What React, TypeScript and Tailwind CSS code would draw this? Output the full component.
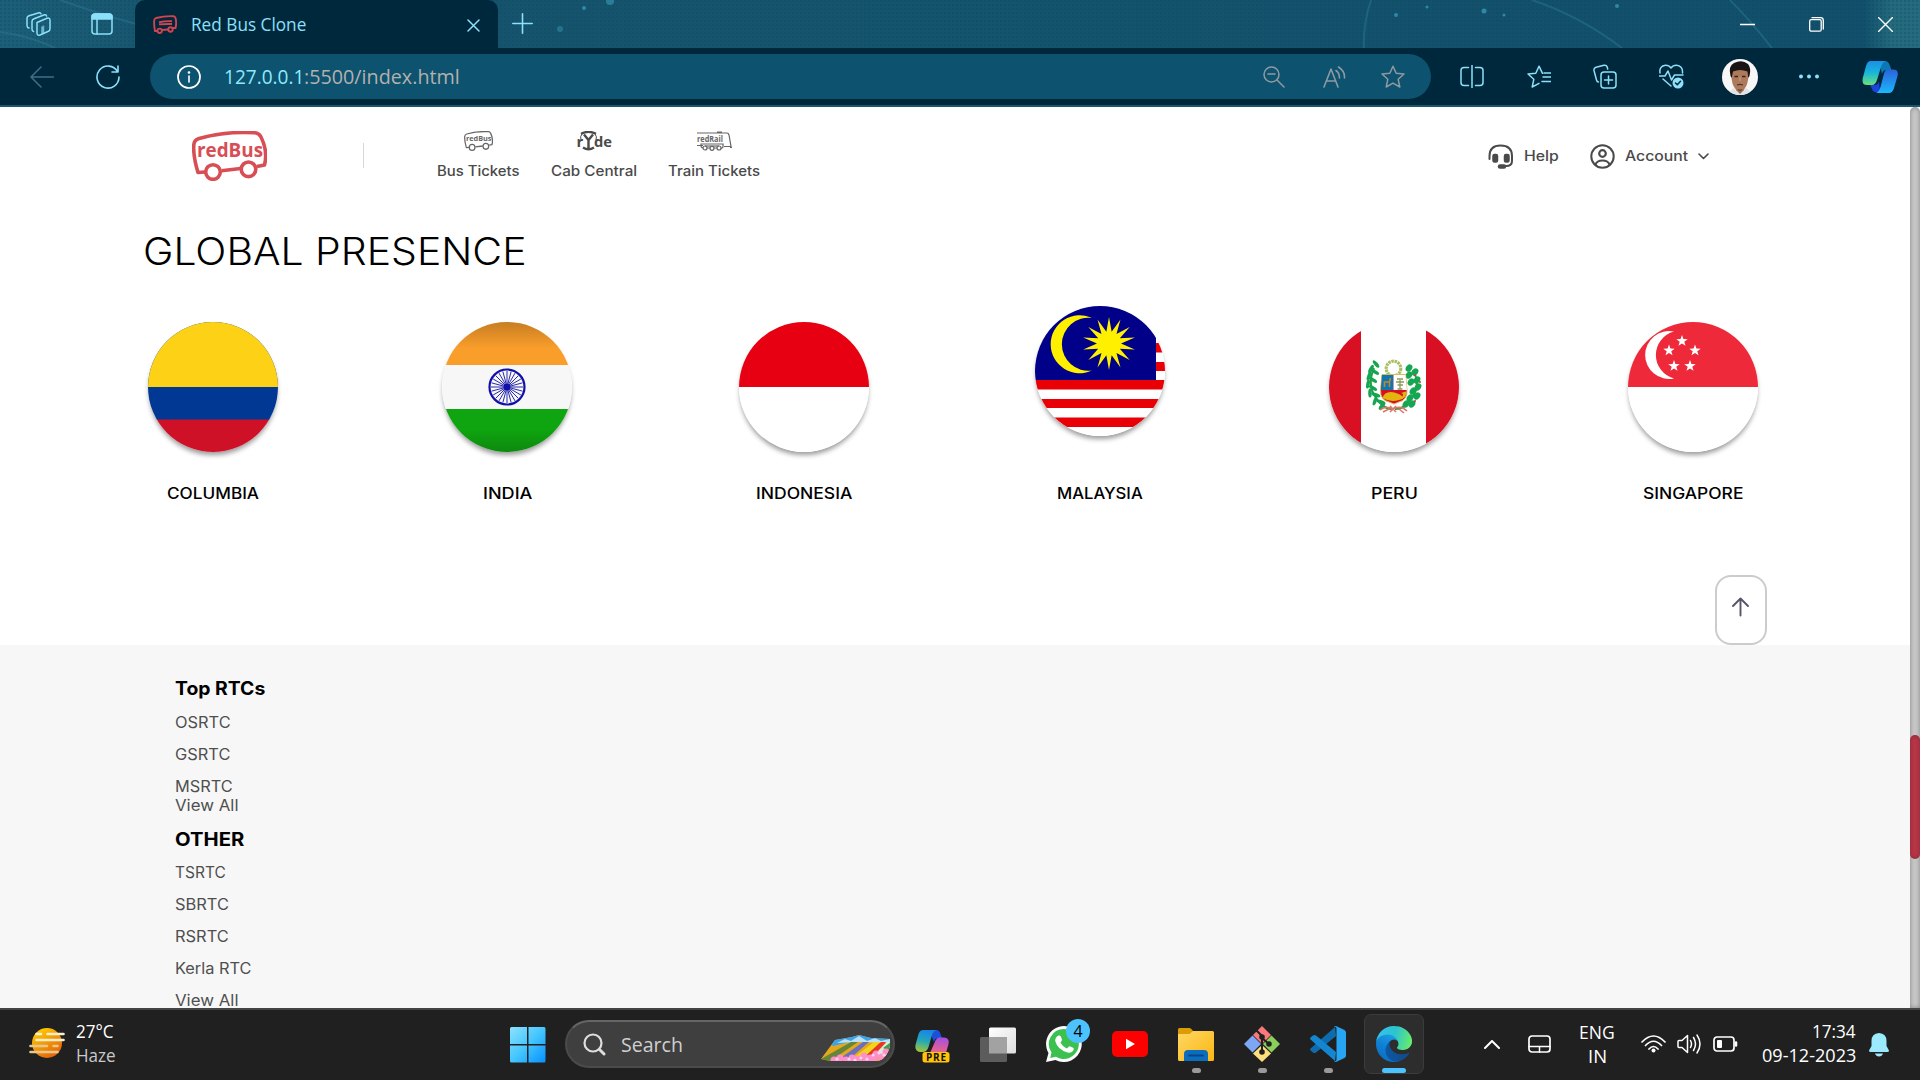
import { useLayoutEffect, useRef, type ReactNode } from "react";

/** Single line of text stretched to the width of its box. */
function Fit({ className, children }: { className: string; children: ReactNode }) {
  const box = useRef<HTMLDivElement>(null);
  const ink = useRef<HTMLSpanElement>(null);
  useLayoutEffect(() => {
    if (box.current && ink.current) {
      ink.current.style.transform = `scaleX(${box.current.clientWidth / ink.current.offsetWidth})`;
    }
  }, []);
  return (
    <div ref={box} className={`shrink-0 whitespace-nowrap ${className}`}>
      <span ref={ink} className="inline-block origin-left">
        {children}
      </span>
    </div>
  );
}

function Ico({ w, h, className = "", children, box }: { w: number; h: number; className?: string; children: ReactNode; box?: string }) {
  return (
    <svg
      width={w}
      height={h}
      viewBox={box ?? `0 0 ${w} ${h}`}
      fill="none"
      stroke="currentColor"
      strokeWidth="1.5"
      strokeLinecap="round"
      strokeLinejoin="round"
      className={`shrink-0 ${className}`}
    >
      {children}
    </svg>
  );
}

function BusArt({ w, h, color, stroke, className = "" }: { w: number; h: number; color: string; stroke: number; className?: string }) {
  return (
    <svg width={w} height={h} viewBox="0 0 75 50" preserveAspectRatio="none" fill="none" stroke={color} strokeWidth={stroke} className={`shrink-0 ${className}`}>
      <path d="M13 41L6 41.500Q1 25 1.800 14Q2 9 7 7.500Q34 0 63 1.800Q67 2 69 6Q76 20 72.500 34L65 35.500M48.500 37.500L29.500 39.700" strokeLinejoin="round" />
      <circle cx="21" cy="41" r="7.300" />
      <circle cx="56.500" cy="38.300" r="7.300" />
      <text x="5" y="26" fill={color} stroke="none" fontSize="19.500" fontWeight="700" fontFamily="Open Sans, sans-serif" textLength="66" lengthAdjust="spacingAndGlyphs">
        redBus
      </text>
    </svg>
  );
}

function TitleBar() {
  return (
    <div className="relative flex h-12 items-center overflow-hidden bg-[#145069] text-[#8ce0fa]">
      <svg className="absolute inset-0" width="1920" height="48" fill="none">
        <defs>
          <pattern id="weave" width="4" height="4" patternUnits="userSpaceOnUse">
            <rect width="2" height="2" fill="#0c4560" />
          </pattern>
          <linearGradient id="strip" x1="0" x2="1">
            <stop offset="0" stopColor="#1d5f78" />
            <stop offset="0.1" stopColor="#16536c" />
            <stop offset="0.5" stopColor="#15546d" />
            <stop offset="0.97" stopColor="#114f6a" />
            <stop offset="0.985" stopColor="#236a7d" />
            <stop offset="1" stopColor="#246b7e" />
          </linearGradient>
        </defs>
        <rect width="1920" height="48" fill="url(#strip)" />
        <rect width="1920" height="48" fill="url(#weave)" opacity="0.3" />
        <g stroke="#2f7a92" strokeWidth="2" opacity="0.45">
          <path d="M0 32Q30 36 55 48M60 0Q100 14 136 24M1371 0Q1363 24 1364 48M1532 0Q1580 16 1622 48M1730 0Q1750 20 1772 48" />
        </g>
        <g fill="#2f88a5">
          <circle cx="560" cy="29" r="3" opacity="0.6" />
          <circle cx="584" cy="8" r="2" />
          <circle cx="1396" cy="15" r="2" />
          <circle cx="1484" cy="11" r="2.500" />
          <circle cx="1427" cy="7" r="1.500" />
          <circle cx="1504" cy="15" r="1.500" />
          <circle cx="1617" cy="6" r="2" />
          <circle cx="610" cy="1" r="4" opacity="0.8" />
        </g>
      </svg>
      <Ico w={25} h={24} className="relative ml-[26px]">
        <path d="M11 10.500L21 6.300Q24 5.500 24 8V16.500Q24 18.500 22.500 19.300L14 23Q11 24 11 21Z" />
        <path d="M7.500 19.500Q6 19 6 17V9.500Q6 7.500 8 6.700L18.500 2.800Q20 2.300 20.500 4M3 16Q1 15.500 1 13.500V6.300Q1 4.500 3 3.700L13 .8Q14.500 .5 15 1.800" />
        <path d="M15.500 15v7l2.500-1v-7z" fill="currentColor" strokeWidth=".5" opacity=".7" />
      </Ico>
      <Ico w={22} h={22} className="relative ml-[40px]">
        <rect x="1" y="1" width="20" height="20" rx="3" />
        <path d="M1 6V4Q1 1 4 1H18Q21 1 21 4V6Z" fill="currentColor" />
        <path d="M6 6V21" />
      </Ico>
      <div className="relative ml-[22px] flex h-12 w-[363px] items-center rounded-t-[10px] bg-[#00283d] pl-[18px]">
        <svg width="24" height="19" viewBox="0 0 24 19" fill="none" stroke="#d04450" strokeWidth="1.900">
          <path d="M4.500 16H2Q.8 10 1.200 5.500Q1.300 3.800 3 3Q12 .8 20.500 1.200Q22 1.300 22.500 3Q23.800 8 22.500 13H20M15 14.500L9 15M6 7.200Q12 6 19 6.200M6 9.400Q12 8.800 19 9" />
          <circle cx="6.700" cy="15.800" r="2.200" />
          <circle cx="17.500" cy="14.500" r="2.200" />
        </svg>
        <Fit className="mb-px ml-[14px] w-[115px] font-['Open_Sans',sans-serif] text-[17.500px] leading-6">Red Bus Clone</Fit>
        <Ico w={13} h={13} className="ml-[161px] mt-[2px]">
          <path d="M1 1L12 12M12 1L1 12" />
        </Ico>
      </div>
      <Ico w={21} h={21} className="relative ml-[14px] mb-px">
        <path d="M10.500 .8V20.200M.8 10.500H20.200" strokeWidth="1.600" />
      </Ico>
      <div className="relative ml-auto mr-[27px] flex gap-[54px] text-white">
        <Ico w={15} h={15}>
          <path d="M0 7.500H15" />
        </Ico>
        <Ico w={15} h={15}>
          <rect x=".7" y="2.700" width="11.500" height="11.500" rx="1.500" strokeWidth="1.300" />
          <path d="M3 .7H11.500Q14.300 .7 14.300 3.500V12" strokeWidth="1.300" />
        </Ico>
        <Ico w={15} h={15}>
          <path d="M.5 .5L14.500 14.500M14.500 .5L.5 14.500" strokeWidth="1.400" />
        </Ico>
      </div>
    </div>
  );
}

function Copilot() {
  return (
    <svg width="36" height="32" viewBox="0 0 36 32" className="ml-[43px] shrink-0">
      <defs>
        <linearGradient id="cpA" x1="0" y1="0" x2="0" y2="1">
          <stop offset="0" stopColor="#1b8fe8" />
          <stop offset="0.5" stopColor="#19b6d8" />
          <stop offset="1" stopColor="#6ae07a" />
        </linearGradient>
        <linearGradient id="cpB" x1="0" y1="0" x2="0" y2="1">
          <stop offset="0" stopColor="#2a63dc" />
          <stop offset="1" stopColor="#1cb8fb" />
        </linearGradient>
      </defs>
      <path d="M17 0H23Q26.500 0 28 5L29.500 9H25Q21 9 20 13Z" fill="#0b78b5" />
      <path d="M8 24H13Q16 24 17 20L18 31.500Q11 32 10 28Z" fill="#1c44dd" />
      <path d="M8.500 0H24Q20.500 1 19 6L15 19Q13.500 24 10 24H5Q-.5 24 .8 17L4 5Q5.500 0 8.500 0Z" fill="url(#cpA)" />
      <path d="M26 8.500H31Q37 8.500 35.500 15L32 27Q30.500 32 27 32H14Q17 31 18.500 26L22 12.500Q23 8.500 26 8.500Z" fill="url(#cpB)" />
    </svg>
  );
}

function AddressBar() {
  return (
    <div className="flex h-[59px] items-center border-b-2 border-[#1f5470] bg-[#00283d] text-[#8ce0fa]">
      <Ico w={24} h={22} className="ml-[30px] text-[#3f6f86]">
        <path d="M23.500 11H1M11 1L1 11L11 21" />
      </Ico>
      <Ico w={24} h={24} className="ml-[42px]">
        <path d="M21.500 6.500A11 11 0 1 0 23 12M22 1V7H16" strokeWidth="1.600" />
      </Ico>
      <div className="ml-[30px] flex h-[45px] w-[1281px] items-center rounded-full bg-[#0d526e] pl-[27px] pr-[26px]">
        <Ico w={24} h={24} className="text-white">
          <circle cx="12" cy="12" r="11" strokeWidth="1.700" />
          <path d="M12 11V17" strokeWidth="1.600" />
          <circle cx="12" cy="7.500" r=".6" fill="currentColor" />
        </Ico>
        <Fit className="ml-[23px] w-[80px] font-['Open_Sans',sans-serif] text-[20px] leading-6 text-[#8ceafd]">127.0.0.1</Fit>
        <Fit className="w-[156px] font-['Open_Sans',sans-serif] text-[20px] leading-6 text-[#b3b1ae]">:5500/index.html</Fit>
        <div className="ml-auto flex items-center text-[#8e9aa2]">
          <Ico w={22} h={22}>
            <circle cx="8.500" cy="8.500" r="7.500" />
            <path d="M14 14L21 21M5 8H12" />
          </Ico>
          <Ico w={23} h={22} className="ml-[38px]">
            <path d="M1 21L8 3L15 21M3.500 15H12.500M13 4.500Q16.500 7 16.500 12M15.500 1Q22 5 21.500 12" strokeWidth="1.600" />
          </Ico>
          <Ico w={24} h={23} className="ml-[35px]">
            <path d="M12 1.200L15.200 8.200L23 9L17.200 14.300L18.800 22L12 18.100L5.200 22L6.800 14.300L1 9L8.800 8.200Z" />
          </Ico>
        </div>
      </div>
      <Ico w={24} h={23} className="ml-[29px]">
        <path d="M12 0V23M8.500 2.500H4Q1 2.500 1 5.500V17.500Q1 20.500 4 20.500H8.500M15.500 2.500H20Q23 2.500 23 5.500V17.500Q23 20.500 20 20.500H15.500" />
      </Ico>
      <Ico w={24} h={23} className="ml-[43px]">
        <path d="M15.500 8.300L12 1.200L8.800 8.300L1 9L6.800 14.300L5.200 22L12 18.300M16 12H24M17 8H24M15 16.500H24" />
      </Ico>
      <Ico w={24} h={25} className="ml-[42px]">
        <rect x="8" y="8" width="15" height="16" rx="3" />
        <path d="M15.500 12V20M11.500 16H19.500M5.500 18Q4 18 3.500 16L1 6.500Q.5 4 3 3.200L11 1.200Q13.500 .8 14.200 3L14.700 5" />
      </Ico>
      <Ico w={25} h={25} className="ml-[42px]">
        <path d="M1 9Q0 2 6.500 1.300Q10 1.200 12 4Q14 1.200 17.500 1.300Q24 2 23.500 9M0 12H6L9 7L12.500 16L15.500 11H24M4 15L12 22" />
        <circle cx="19" cy="19" r="5.500" fill="currentColor" stroke="none" />
        <path d="M16.500 19L18.300 20.800L21.500 17.300" stroke="#00283d" />
      </Ico>
      <svg width="36" height="36" viewBox="0 0 36 36" className="ml-[38px] shrink-0 rounded-full bg-[#f8f7f7]">
        <path d="M6 36Q9 29 14 28.500H22Q27 29 30 36Z" fill="#e4e2e4" />
        <path d="M14 24H22V31L18 35L14 31Z" fill="#99674d" />
        <path d="M9.500 15Q9 6 18 6Q27 6 26.500 15Q26.500 26 21.500 31Q18 34 14.500 31Q9 26 9.500 15Z" fill="#ad7a5c" />
        <path d="M8.500 17Q6 7 12 4Q20 0 26 5Q29.500 9 27.500 17L26.300 19L25.500 12.500Q18 9.500 11 12.500L9.700 19Z" fill="#191516" />
        <path d="M12.500 17.500H16M20 17.500H23.500" stroke="#3a261e" strokeWidth="1.300" />
        <path d="M15 26Q18 24.800 21 26" stroke="#54352a" fill="none" strokeWidth="1.300" />
        <path d="M16 30.500Q18 32 20 30.500" stroke="#6b4736" fill="none" strokeWidth="1.500" />
        <path d="M18 18V22" stroke="#c9957a" strokeWidth="1.400" />
      </svg>
      <Ico w={20} h={5} className="ml-[41px]">
        <g fill="currentColor" stroke="none">
          <circle cx="2" cy="2.500" r="2" />
          <circle cx="10" cy="2.500" r="2" />
          <circle cx="18" cy="2.500" r="2" />
        </g>
      </Ico>
      <Copilot />
    </div>
  );
}

function SiteHeader() {
  const label = "mt-[10px] text-[14px] leading-5 font-[450]";
  return (
    <header className="flex h-[98px] items-start text-[#4a4a4a]">
      <BusArt w={75} h={50} color="#d84e55" stroke={3.6} className="ml-[192px] mt-6" />
      <div className="ml-24 mt-9 h-[25px] w-px bg-[#d8d8d8]" />
      <nav className="ml-[73px] mt-6 flex gap-[31px]">
        <div className="flex flex-col items-center">
          <BusArt w={29} h={20} color="#666" stroke={3.2} />
          <Fit className={`w-[83px] ${label}`}>Bus Tickets</Fit>
        </div>
        <div className="flex flex-col items-center">
          <svg width="35" height="20" viewBox="0 0 35 20" fill="none" stroke="#4a4a4a" strokeWidth="2">
            <path d="M4 2.800Q11.500 -1 19 2.800M7 3.500L11.500 9L16 3.500M11.500 9V17M6 16.500Q11.500 20 17 16.500" strokeWidth="2.400" />
            <path d="M5.500 2Q2.500 6 4 9M17.500 2Q20.500 6 19 9" strokeWidth="1" />
            <g fill="#4a4a4a" stroke="none" fontFamily="Open Sans, sans-serif" fontSize="15" fontWeight="700">
              <text x="-.5" y="15.500">r</text>
              <text x="17" y="15.500" textLength="18" lengthAdjust="spacingAndGlyphs">de</text>
            </g>
          </svg>
          <Fit className={`w-[86px] ${label}`}>Cab Central</Fit>
        </div>
        <div className="flex flex-col items-center">
          <svg width="35" height="20" viewBox="0 0 35 20" fill="none" stroke="#666" strokeWidth="1.200">
            <path d="M0 2H30Q31.500 2 32 4L34 15.500H27M35 16.500H33M0 14.500H6M20 1H25" />
            <path d="M4 13H26V16Q25 18 22 17H8Q4 17 4 15Z" />
            <circle cx="8" cy="17" r="2" fill="#fff" />
            <circle cx="15" cy="17.300" r="2" fill="#fff" />
            <circle cx="22" cy="17" r="2" fill="#fff" />
            <path d="M8 15H22" />
            <text x="0" y="10.500" fill="#666" stroke="none" fontSize="8" fontWeight="700" fontFamily="Open Sans, sans-serif" textLength="26" lengthAdjust="spacingAndGlyphs">
              redRail
            </text>
          </svg>
          <Fit className={`w-[92px] ${label}`}>Train Tickets</Fit>
        </div>
      </nav>
      <div className="ml-auto mt-9 mr-[201px] flex h-[26px] items-center">
        <Ico w={26} h={25}>
          <path d="M1.500 15V12Q1.500 1.500 12.500 1.500Q24 1.500 24 12V17Q24 22 18 22" strokeWidth="2" />
          <rect x="5" y="10.500" width="4.500" height="7.500" rx="1.500" fill="currentColor" />
          <rect x="16.500" y="10.500" width="4.500" height="7.500" rx="1.500" fill="currentColor" />
          <path d="M12 22.500H16" strokeWidth="4.500" />
        </Ico>
        <Fit className="ml-[10px] w-[35px] text-[14px] leading-5 font-[450]">Help</Fit>
        <Ico w={25} h={25} className="ml-[31px]">
          <circle cx="12.500" cy="12.500" r="11.200" strokeWidth="2" />
          <circle cx="12.500" cy="9.500" r="3.300" strokeWidth="2.200" />
          <path d="M5.500 20.500Q7 16.500 12.500 16.500Q18 16.500 19.500 20.500" strokeWidth="2.200" />
        </Ico>
        <Fit className="ml-[10px] w-[63px] text-[14px] leading-5 font-[450]">Account</Fit>
        <Ico w={11} h={7} className="ml-[10px]">
          <path d="M1 1L5.500 5.500L10 1" strokeWidth="1.600" />
        </Ico>
      </div>
    </header>
  );
}

function starPoints(cx: number, cy: number, outer: number, inner: number, n: number) {
  return Array.from({ length: n * 2 }, (_, i) => {
    const r = i % 2 ? inner : outer;
    const a = (Math.PI * i) / n - Math.PI / 2;
    return `${(cx + r * Math.cos(a)).toFixed(2)},${(cy + r * Math.sin(a)).toFixed(2)}`;
  }).join(" ");
}

const columbia = (
  <>
    <rect width="130" height="98" fill="#003893" />
    <rect width="130" height="65" fill="#fcd116" />
    <rect y="97.500" width="130" height="33" fill="#ce1126" />
  </>
);

const spokes = Array.from({ length: 24 }, (_, i) => {
  const a = (Math.PI * i) / 12;
  return `M65 65L${(65 + 16 * Math.cos(a)).toFixed(2)} ${(65 + 16 * Math.sin(a)).toFixed(2)}`;
}).join("");

const india = (
  <>
    <defs>
      <linearGradient id="shade" x1="0" y1="0" x2="0" y2="1">
        <stop offset="0" stopOpacity="0.2" />
        <stop offset="0.2" stopOpacity="0" />
        <stop offset="0.82" stopOpacity="0" />
        <stop offset="1" stopOpacity="0.17" />
      </linearGradient>
    </defs>
    <rect width="130" height="43" fill="#f99d2b" />
    <rect y="43" width="130" height="44" fill="#f7f7f7" />
    <rect y="87" width="130" height="43" fill="#0fa510" />
    <rect width="130" height="130" fill="url(#shade)" />
    <circle cx="65" cy="65" r="17.500" fill="none" stroke="#1111a8" strokeWidth="2.200" />
    <path d={spokes} stroke="#1111a8" strokeWidth="0.900" />
    <circle cx="65" cy="65" r="3.300" fill="#1111a8" />
  </>
);

const indonesia = (
  <>
    <rect width="130" height="130" fill="#fff" />
    <rect width="130" height="65" fill="#e70011" />
  </>
);

const malaysia = (
  <>
    <rect width="130" height="130" fill="#fff" />
    <path d="M0 74H130V83.500H0ZM0 93H130V102H0ZM0 111.500H130V121H0ZM121 37H130V46.500H121ZM121 56H130V65H121Z" fill="#e90007" />
    <rect width="121" height="74" fill="#000088" />
    <path d="M57 12A29 29 0 1 0 57 64.500A26.500 26.500 0 1 1 57 12Z" fill="#fff000" />
    <polygon points={starPoints(74, 37.5, 26.5, 12, 14)} fill="#fff000" />
  </>
);

const leafSpots: [number, number, number][] = [
  [47, 42, -40], [42, 47, 30], [46, 50, -60], [40, 54, 20], [44, 58, -60], [39, 62, 10], [44, 66, -60], [41, 71, 0], [47, 73, -70],
  [46, 79, 20], [52, 80, -70], [53, 84, 40],
];
const leavesRight: [number, number][] = [[80, 46], [86, 50], [80, 53], [88, 58], [82, 60], [89, 65], [84, 69], [88, 74], [81, 76], [83, 82], [77, 82]];

const peru = (
  <>
    <rect width="130" height="130" fill="#fff" />
    <path d="M0 0H32V130H0ZM97 0H130V130H97Z" fill="#d91023" />
    <path d="M45 46Q36 66 52 82Q57 87 63 87M84 48Q94 66 78 82Q73 87 66 87" stroke="#2b9a4c" strokeWidth="2" fill="none" />
    <g fill="#14a651">
      {leafSpots.map(([x, y, a]) => (
        <ellipse key={`${x}-${y}`} cx={x} cy={y} rx="1.800" ry="4.600" transform={`rotate(${a} ${x} ${y})`} />
      ))}
      {leavesRight.map(([x, y]) => (
        <ellipse key={`${x}-${y}`} cx={x} cy={y} rx="3" ry="4" transform={`rotate(35 ${x} ${y})`} />
      ))}
    </g>
    <g fill="#c73d3d">
      <circle cx="86" cy="53" r="1" />
      <circle cx="91" cy="60" r="1" />
      <circle cx="86" cy="79" r="1" />
    </g>
    <circle cx="64.500" cy="46.500" r="7.300" fill="#fff" stroke="#a9bf62" strokeWidth="3.200" strokeDasharray="2.500 .7" />
    <path d="M53 52.500H76.500L78 68Q78.500 78 70 80L65 82L60 80Q51 78 51.500 68Z" fill="#d91023" stroke="#d8bd5a" strokeWidth="1" />
    <path d="M53 53H64.500V68H52Z" fill="#1077ae" />
    <path d="M64.500 53H76.500L78 68H64.500Z" fill="#fff" />
    <path d="M55.500 65V60H60.500L61.500 56M60.500 60V65" stroke="#c48532" strokeWidth="1.600" fill="none" />
    <path d="M71 67V58M68 57H74M67 60H75M68.500 63H74M68.500 67H73.500" stroke="#8c9a55" strokeWidth="1.300" />
    <path d="M53.500 76Q55 70 62 70Q69 70.500 73.500 74.500Q75 71.500 72 71L77 69.500Q78 77 70 78Q61 80.500 53.500 76Z" fill="#e3b510" />
    <path d="M51 88Q57 83 63 87Q72 83 78 89M54 90L60 87M70 87L75 91M61 84L67 90M67 84L61 90" stroke="#dd7665" strokeWidth="1.600" fill="none" />
  </>
);

const singapore = (
  <>
    <rect width="130" height="130" fill="#fff" />
    <rect width="130" height="65" fill="#ee2a3a" />
    <path d="M46 9.500A24 24 0 1 0 46 56.500A24.300 24.300 0 0 1 46 9.500Z" fill="#fff" />
    {[[54, 19], [41, 28.500], [67, 28.500], [46, 44], [62, 44]].map(([x, y]) => (
      <polygon key={`${x}-${y}`} points={starPoints(x, y, 6, 2.4, 5)} fill="#fff" />
    ))}
  </>
);

const countries = [
  { name: "COLUMBIA", art: columbia, cell: "ml-[148px] pt-4", label: "w-[92px] mt-[31px]" },
  { name: "INDIA", art: india, cell: "ml-[164px] pt-4", label: "w-[49px] mt-[31px]" },
  { name: "INDONESIA", art: indonesia, cell: "ml-[167px] pt-4", label: "w-[96px] mt-[31px]" },
  { name: "MALAYSIA", art: malaysia, cell: "ml-[166px]", label: "w-[86px] mt-[47px]" },
  { name: "PERU", art: peru, cell: "ml-[164px] pt-4", label: "w-[47px] mt-[31px]" },
  { name: "SINGAPORE", art: singapore, cell: "ml-[169px] pt-4", label: "w-[100px] mt-[31px]" },
];

const rtcs = [
  { name: "OSRTC", cls: "w-[56px] mt-3 h-[19px]" },
  { name: "GSRTC", cls: "w-[55px] mt-[13px] h-[19px]" },
  { name: "MSRTC", cls: "w-[58px] mt-[13px] h-[19px]" },
  { name: "View All", cls: "w-[63px] h-[19px]" },
];
const others = [
  { name: "TSRTC", cls: "w-[51px] mt-[11px] h-[19px]" },
  { name: "SBRTC", cls: "w-[54px] mt-[13px] h-[19px]" },
  { name: "RSRTC", cls: "w-[54px] mt-[13px] h-[19px]" },
  { name: "Kerla RTC", cls: "w-[77px] mt-[13px] h-[19px]" },
  { name: "View All", cls: "w-[63px] mt-[13px] h-[17px]" },
];

function Page() {
  return (
    <div className="flex h-[901px] overflow-hidden bg-white font-['Inter',sans-serif]">
      <main className="w-[1910px] shrink-0">
        <SiteHeader />
        <h1>
          <Fit className="mt-[22px] ml-[143px] h-12 w-[384px] text-[37.500px] leading-[49px] font-light text-black">GLOBAL PRESENCE</Fit>
        </h1>
        <div className="mt-[31px] flex items-start">
          {countries.map((c) => (
            <div key={c.name} className={`flex w-[130px] shrink-0 flex-col items-center ${c.cell}`}>
              <div className="h-[130px] w-[130px] overflow-hidden rounded-full shadow-[0_4px_5px_-1px_rgba(0,0,0,0.4)]">
                <svg width="130" height="130">{c.art}</svg>
              </div>
              <Fit className={`h-[21px] text-[15.500px] leading-[22px] font-[550] text-black ${c.label}`}>{c.name}</Fit>
            </div>
          ))}
        </div>
        <button className="mt-[71px] ml-[1715px] flex h-[70px] w-[52px] justify-center rounded-[16px] border-2 border-[#ccc] pt-5 pr-px text-[#55556c]">
          <Ico w={17} h={20}>
            <path d="M8.500 18.500V2M1 9L8.500 1.500L16 9" strokeWidth="1.900" />
          </Ico>
        </button>
        <footer className="h-[363px] overflow-hidden bg-[#f7f7f7] pt-[31px] pl-[175px] text-[#4f4f4f]">
          <Fit className="h-[25px] w-[90px] text-[18.500px] leading-[25px] font-bold text-black">Top RTCs</Fit>
          {rtcs.map((r) => (
            <Fit key={r.name} className={`text-[15.500px] leading-[19px] font-[370] ${r.cls}`}>{r.name}</Fit>
          ))}
          <Fit className="mt-3 h-[25px] w-[69px] text-[18.500px] leading-[25px] font-bold text-black">OTHER</Fit>
          {others.map((r) => (
            <Fit key={r.name} className={`text-[15.500px] leading-[19px] font-[370] ${r.cls}`}>{r.name}</Fit>
          ))}
        </footer>
      </main>
      <div className="w-[10px] shrink-0 rounded-t-[5px] bg-[#c8c8c8] shadow-[inset_0_0_5px_rgba(0,0,0,0.35)]">
        <div className="mt-[628px] h-[124px] rounded-[5px] bg-[#b83647] shadow-[inset_0_0_5px_rgba(0,0,0,0.25)]" />
      </div>
    </div>
  );
}

function AppIcon({ children, dot = "none", className = "" }: { children: ReactNode; dot?: "none" | "idle"; className?: string }) {
  return (
    <div className={`flex h-[60px] w-9 shrink-0 flex-col items-center pt-3 ${className}`}>
      {children}
      {dot === "idle" && <div className="mt-[6px] h-[5px] w-[9px] shrink-0 rounded-full bg-[#9a9a9a]" />}
    </div>
  );
}

function Taskbar() {
  const seg = "font-['Open_Sans',sans-serif] text-[17.500px] leading-6";
  return (
    <div className="flex h-[72px] items-start border-t-2 border-[#444] bg-[#202020]">
      <svg width="36" height="31" viewBox="0 0 36 31" className="mt-[18px] ml-[29px] shrink-0" strokeLinecap="round" strokeWidth="2.600">
        <defs>
          <linearGradient id="sun" x1="0.2" y1="0" x2="0.8" y2="1">
            <stop offset="0" stopColor="#ffd000" />
            <stop offset="1" stopColor="#e35b0c" />
          </linearGradient>
        </defs>
        <circle cx="18" cy="15" r="15" fill="url(#sun)" />
        <path d="M7.500 6H12M18.500 6H34.500M7.500 12H34.500" stroke="#fbeed0" />
        <path d="M1.500 18H18M24.500 18H28.500M1.500 24H28.500" stroke="#e9c68a" />
      </svg>
      <div className="mt-[9px] ml-[11px]">
        <Fit className={`w-[38px] text-white ${seg}`}>27°C</Fit>
        <Fit className={`w-[40px] text-[#c9c9c9] ${seg}`}>Haze</Fit>
      </div>
      <svg width="36" height="36" viewBox="0 0 36 36" className="mt-[17px] ml-[394px] shrink-0">
        <defs>
          <linearGradient id="win" x1="0" y1="0" x2="1" y2="1">
            <stop offset="0" stopColor="#8ce2ff" />
            <stop offset="0.5" stopColor="#45c6fd" />
            <stop offset="1" stopColor="#0591ff" />
          </linearGradient>
        </defs>
        <path d="M1.500 0H17V17H0V1.500Q0 0 1.500 0ZM18.500 0H34Q35.500 0 35.500 1.500V17H18.500ZM0 18.500H17V35.500H1.500Q0 35.500 0 34ZM18.500 18.500H35.500V34Q35.500 35.500 34 35.500H18.500Z" fill="url(#win)" />
      </svg>
      <div className="mt-[10px] ml-[19px] flex h-12 w-[330px] shrink-0 items-center rounded-full border-2 border-[#4b4b4b] border-t-[#656565] bg-[#3f3f3f] pl-4">
        <Ico w={23} h={23} className="text-[#dedede]">
          <circle cx="10" cy="10" r="8.500" strokeWidth="2.200" />
          <path d="M16.500 16.500L21 21" strokeWidth="3" />
        </Ico>
        <Fit className="ml-[15px] w-[62px] font-['Open_Sans',sans-serif] text-[20.500px] leading-7 text-[#cfcfcf]">Search</Fit>
        <svg width="70" height="28" viewBox="0 0 70 28" className="mt-2 ml-[138px]">
          <defs>
            <clipPath id="fieldClip">
              <path d="M0 25L14 6L31 3L38 1L50 4L69 5V12Q66 24 58 27H9Z" />
            </clipPath>
          </defs>
          <g clipPath="url(#fieldClip)">
            <rect width="70" height="28" fill="#e5a81c" />
            <path d="M0 0H70V9L38 6L12 12Z" fill="#3ba3ea" />
            <path d="M16 9L24 5L30 7L38 2L46 7L54 4L60 7L69 5V9L38 8Z" fill="#b9e0f7" />
            <path d="M0 25L30 8L37 8L8 28Z" fill="#65863a" />
            <path d="M14 28L42 8L48 8L25 28Z" fill="#6b70bd" />
            <path d="M27 28L53 8H59L39 28Z" fill="#f4d31c" />
            <path d="M40 26L60 8H65L50 26Z" fill="#e93525" />
            <path d="M52 22L66 8H70V22Z" fill="#d8eeda" />
            <path d="M62 14L70 8V18Z" fill="#459b4d" />
            <g fill="#ff8fcb">
              {[[13, 26], [19, 24], [25, 26], [31, 24], [37, 25], [43, 22], [49, 24], [55, 20], [60, 23], [65, 18], [53, 26], [38, 27], [30, 27], [45, 26]].map(([x, y]) => (
                <circle key={`${x}-${y}`} cx={x} cy={y} r="3.500" />
              ))}
            </g>
            <g fill="#ffd3ea">
              {[[16, 25], [28, 25], [40, 24], [46, 25], [58, 19], [63, 21], [34, 26], [52, 21]].map(([x, y]) => (
                <circle key={`${x}-${y}`} cx={x} cy={y} r="1.600" />
              ))}
            </g>
          </g>
        </svg>
      </div>

      <div className="mt-1 ml-5 flex shrink-0">
        <AppIcon>
          <svg width="36" height="37" viewBox="0 0 36 37">
            <defs>
              <linearGradient id="cA" x1="0.500" y1="0" x2="0.300" y2="1">
                <stop offset="0" stopColor="#1a83e8" />
                <stop offset="0.500" stopColor="#22a9b8" />
                <stop offset="1" stopColor="#a5c438" />
              </linearGradient>
              <linearGradient id="cB" x1="0.500" y1="0" x2="0.400" y2="1">
                <stop offset="0" stopColor="#a44fe8" />
                <stop offset="1" stopColor="#f0657c" />
              </linearGradient>
            </defs>
            <path d="M14 4H21Q24.500 4 25.500 8L27 12H23Q20 12 19 16Z" fill="#1c50d8" />
            <path d="M8 4H22Q18 5 17 9L13.500 21Q12 26 8 26H5Q-.5 25 .5 19L3.500 8Q5 4 8 4Z" fill="url(#cA)" />
            <path d="M24 11.500H29Q35 12 33.500 18L31 27H15L20.500 14.500Q22 11.500 24 11.500Z" fill="url(#cB)" />
            <rect x="7.500" y="26" width="27" height="10.500" rx="2.500" fill="#ffc40c" />
            <text x="11" y="34.800" fontSize="10" fontWeight="700" fontFamily="Open Sans, sans-serif" fill="#111" textLength="20">
              PRE
            </text>
          </svg>
        </AppIcon>
        <AppIcon className="ml-[29px]">
          <svg width="36" height="36" viewBox="0 0 36 36">
            <defs>
              <linearGradient id="tv" x1="0" y1="0" x2="1" y2="1">
                <stop offset="0" stopColor="#fff" />
                <stop offset="1" stopColor="#dedede" />
              </linearGradient>
            </defs>
            <rect x="9" y="1.500" width="27" height="26" rx="1.500" fill="url(#tv)" />
            <rect x="0" y="11" width="27" height="25" rx="1.500" fill="#5c5c5c" />
            <path d="M9 11H27V27.500H9Z" fill="#a2a2a2" />
          </svg>
        </AppIcon>
        <AppIcon className="relative ml-[30px]">
          <svg width="36" height="36" viewBox="0 0 36 36">
            <path d="M18 0A18 18 0 1 1 9.500 34L0 36L2.500 27A18 18 0 0 1 18 0Z" fill="#fff" />
            <path d="M18 3A15 15 0 1 1 10 30.800L4.200 32L5.500 26.500A15 15 0 0 1 18 3Z" fill="#3cc151" />
            <path d="M12.500 9.500Q14 9 14.800 10.500L16 13.500Q16.300 14.500 14.500 16.500Q17 21 21 22.500L23 20.500Q23.800 20 25 20.700L27.500 22Q28.300 23 27 25Q25 27.500 21.500 26.500Q11.500 23.500 9.200 15Q9 11 12.500 9.500Z" fill="#fff" />
          </svg>
          <div className="absolute top-[5px] left-5 flex h-6 w-6 items-center justify-center rounded-full bg-[#4cc2ff] font-['Open_Sans',sans-serif] text-[16px] leading-none text-black">4</div>
        </AppIcon>
        <AppIcon className="ml-[30px]">
          <svg width="36" height="36" viewBox="0 0 36 36">
            <rect x="0" y="5" width="36" height="26" rx="5" fill="#fe0000" />
            <path d="M14 12.800V23.200L23 18Z" fill="#fff" />
          </svg>
        </AppIcon>
        <AppIcon dot="idle" className="ml-[30px]">
          <svg width="36" height="36" viewBox="0 0 36 36" className="shrink-0">
            <defs>
              <linearGradient id="fo" x1="0" y1="0" x2="1" y2="1">
                <stop offset="0" stopColor="#ffd766" />
                <stop offset="1" stopColor="#fbb70f" />
              </linearGradient>
            </defs>
            <path d="M0 3.500Q0 2 1.500 2H11Q12.500 2 13.500 3.200L16 6V12H0Z" fill="#dc9c05" />
            <path d="M0 8H11.500L15 5H34.500Q36 5 36 6.500V33.500Q36 35 34.500 35H1.500Q0 35 0 33.500Z" fill="url(#fo)" />
            <path d="M6 35V28Q6 24 10 24H26Q30 24 30 28V35Z" fill="#0c6cbd" />
            <path d="M11 29.500H25" stroke="#06478a" strokeWidth="1.800" strokeLinecap="round" />
          </svg>
        </AppIcon>
        <AppIcon dot="idle" className="ml-[30px]">
          <svg width="36" height="36" viewBox="0 0 36 36" className="shrink-0">
            <path d="M18 0L27 9L18 18L9 9Z" fill="#f8787c" />
            <path d="M8.500 9.500L17 18L8.500 26.500L0 18Z" fill="#7da7f5" />
            <path d="M27.500 9.500L36 18L27.500 26.500L19 18Z" fill="#8cce5b" />
            <path d="M18 19L27 27.500L18 36L9 27.500Z" fill="#fde07c" />
            <path d="M12 4L18 10V26M18 12L25 18" stroke="#202020" strokeWidth="2" fill="none" />
            <circle cx="18" cy="11" r="2.800" fill="#202020" />
            <circle cx="18" cy="26" r="2.800" fill="#202020" />
            <circle cx="25" cy="18" r="2.800" fill="#202020" />
          </svg>
        </AppIcon>
        <AppIcon dot="idle" className="ml-[30px]">
          <svg width="36" height="36" viewBox="0 0 36 36" className="shrink-0">
            <path d="M25 1L26 10L6 26.500Q4 27.500 3 26.500L.5 24.500Q-.3 23.500 .5 22.500Z" fill="#0e6cae" />
            <path d="M25 35L26 26L6 9.500Q4 8.500 3 9.500L.5 11.500Q-.3 12.500 .5 13.500Z" fill="#1486cf" />
            <path d="M26.500 .2L34.500 4Q36 5 36 6.500V29.500Q36 31 34.500 32L26.500 35.800Q25 36.300 23.800 35Q26.500 36 26.500 33.500V2.500Q26.500 0 23.800 1Q25 -.3 26.500 .2Z" fill="#27a5f2" />
          </svg>
        </AppIcon>
        <div className="ml-[18px] flex h-[60px] w-[60px] flex-col items-center rounded-[7px] border border-[#3b3b3b] bg-[#2d2d2d] pt-[11px]">
          <svg width="36" height="36" viewBox="0 0 256 256" className="shrink-0">
            <defs>
              <linearGradient id="e1" x1="0" y1="0.500" x2="1" y2="0.600">
                <stop offset="0" stopColor="#0c59a4" />
                <stop offset="1" stopColor="#114a8b" />
              </linearGradient>
              <linearGradient id="e2" x1="0.700" y1="0.100" x2="0.300" y2="1">
                <stop offset="0" stopColor="#1b9de2" />
                <stop offset="0.500" stopColor="#0f7ed4" />
                <stop offset="1" stopColor="#0a6cc0" />
              </linearGradient>
              <linearGradient id="e3" x1="0" y1="0.300" x2="1" y2="0.500">
                <stop offset="0" stopColor="#35c1f1" />
                <stop offset="0.500" stopColor="#2bc4cf" />
                <stop offset="1" stopColor="#66eb6e" />
              </linearGradient>
            </defs>
            <path fill="url(#e1)" d="M231 190.500c-3.400 1.800-6.900 3.400-10.500 4.700a101.500 101.500 0 0 1-35.900 6.500c-47.300 0-88.500-32.500-88.500-74.300.1-11.400 6.400-21.900 16.400-27.300-42.800 1.800-53.800 46.400-53.800 72.500 0 73.900 68.100 81.400 82.800 81.400 7.900 0 19.800-2.300 27-4.600l1.300-.4a128.300 128.300 0 0 0 66.600-52.800c1.200-1.900.6-4.300-1.200-5.500-1.300-.8-2.900-.9-4.200-.2z" />
            <path fill="url(#e2)" d="M105.700 241.400c-8.900-5.500-16.600-12.800-22.700-21.300a80.980 80.980 0 0 1 29.500-120c3.100-1.500 8.500-4.100 15.600-4 10.100.1 19.700 4.900 25.700 13 4 5.400 6.300 11.900 6.400 18.700 0-.2 24.500-79.600-80-79.600-43.900 0-80 41.700-80 78.200-.2 19.300 4 38.500 12.100 56 27.600 58.800 94.800 87.600 156.400 67.100-21.100 6.600-44.100 3.700-63-8.100z" />
            <path fill="url(#e3)" d="M152.300 148.900c-.9 1-3.300 2.500-3.300 5.700 0 2.600 1.700 5.100 4.700 7.300 14.500 10.100 41.900 8.800 42 8.800 10.700 0 21.300-2.900 30.500-8.300 18.800-11 30.400-31.100 30.400-52.900.3-22.400-8-37.300-11.300-43.900C223.700 23.900 177.700 0 127.700 0 57.400-.1.1 56.800-.3 127.100c.5-36.500 36.800-66 80-66 3.500 0 23.500.3 42 10.100 16.300 8.600 24.900 18.900 30.800 29.200 6.200 10.700 7.300 24.100 7.300 29.500 0 5.300-2.700 13.300-7.500 19z" />
          </svg>
          <div className="mt-[6px] h-[5px] w-6 shrink-0 rounded-full bg-[#4cc2ff]" />
        </div>
      </div>

      <div className="ml-[60px] flex h-[68px] items-center text-white">
        <Ico w={16} h={9}>
          <path d="M1 8L8 1L15 8" strokeWidth="2" />
        </Ico>
        <Ico w={23} h={18} className="ml-7">
          <rect x="1" y="1" width="21" height="16" rx="3" strokeWidth="1.700" />
          <path d="M1 11.500H22M11.500 11.500V17" />
        </Ico>
      </div>
      <div className="mt-[10px] ml-[28px] flex flex-col items-center">
        <Fit className={`w-[36px] text-white ${seg}`}>ENG</Fit>
        <Fit className={`w-[19px] text-white ${seg}`}>IN</Fit>
      </div>
      <div className="ml-[26px] flex h-[68px] items-center text-white">
        <Ico w={25} h={18}>
          <path d="M1 7Q12.500 -5 24 7M4.500 10.500Q12.500 2 20.500 10.500M8 14Q12.500 9 17 14" strokeWidth="1.700" />
          <circle cx="12.500" cy="15.500" r="2" fill="currentColor" stroke="none" />
        </Ico>
        <Ico w={24} h={20} className="ml-[11px]">
          <path d="M1 7.500Q1 6.500 2 6.500H5L10.500 1.500V18.500L5 13.500H2Q1 13.500 1 12.500ZM13.500 6.500Q15.500 10 13.500 13.500M16.500 3.500Q20.500 10 16.500 16.500M20 1Q26 10 20 19" />
        </Ico>
        <Ico w={25} h={16} className="ml-3">
          <rect x="1" y="1" width="20" height="14" rx="3" strokeWidth="1.700" />
          <rect x="4" y="4" width="5" height="8" rx="1" fill="currentColor" stroke="none" />
          <path d="M23 6.500V9.500" strokeWidth="2.500" />
        </Ico>
      </div>
      <div className="mt-[9px] ml-6 flex flex-col items-end">
        <Fit className={`w-[44px] text-white ${seg}`}>17:34</Fit>
        <Fit className={`w-[94px] text-white ${seg}`}>09-12-2023</Fit>
      </div>
      <svg width="20" height="24" viewBox="0 0 20 24" fill="#9beafe" className="mt-[23px] ml-[13px] shrink-0">
        <path d="M10 0Q17.500 .5 17.500 8V13L20 17.500Q20 19 18.500 19H1.500Q0 19 0 17.500L2.500 13V8Q2.500 .5 10 0ZM6 20.500H14Q13 23.500 10 23.500Q7 23.500 6 20.500Z" />
      </svg>
    </div>
  );
}

export default function App() {
  return (
    <div className="h-[1080px] w-[1920px] overflow-hidden bg-white">
      <TitleBar />
      <AddressBar />
      <Page />
      <Taskbar />
    </div>
  );
}
